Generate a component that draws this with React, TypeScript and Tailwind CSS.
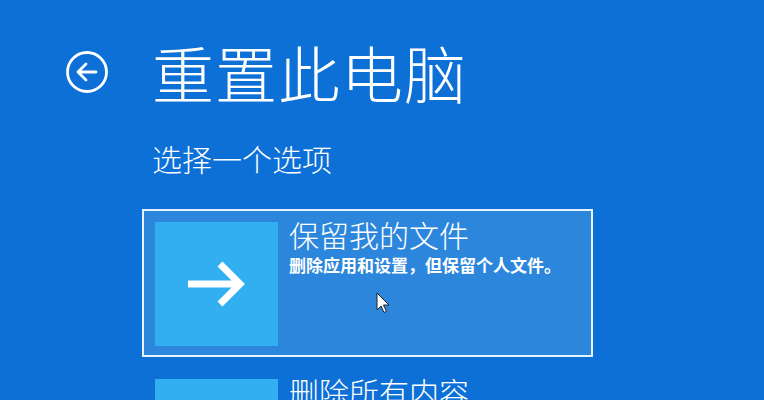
import React from 'react';

type Option = {
  title: string;
  desc?: string;
  selected?: boolean;
};

const options: Option[] = [
  { title: '保留我的文件', desc: '删除应用和设置，但保留个人文件。', selected: true },
  { title: '删除所有内容', desc: '删除所有个人文件、应用和设置。' },
];

function BackIcon() {
  return (
    <svg width="44" height="44" viewBox="0 0 44 44" fill="none" stroke="white" strokeWidth="2.8" strokeLinecap="round" strokeLinejoin="round">
      <circle cx="22" cy="22" r="19.5" />
      <path d="M31 22H13M21 14l-8 8 8 8" />
    </svg>
  );
}

function ArrowIcon() {
  return (
    <svg width="62" height="50" viewBox="0 0 62 50" fill="none" stroke="white" strokeWidth="7" strokeLinejoin="miter">
      <path d="M2 25h52M34 5l20 20-20 20" />
    </svg>
  );
}

export default function App() {
  return (
    <div
      className="w-[764px] h-[400px] overflow-hidden bg-[#0d70d6] text-white relative"
      style={{ fontFamily: '"Noto Sans CJK SC", "Noto Sans", sans-serif' }}
    >
      <div className="flex items-center pt-[40px] pl-[65px]">
        <BackIcon />
        <h1 className="ml-[43px] text-[62px] leading-[64px] font-light tracking-[1px]">重置此电脑</h1>
      </div>

      <div className="pl-[152px] pt-[36px]">
        <p className="text-[30px] leading-[36px] font-light">选择一个选项</p>

        <div className="mt-[33px] flex flex-col gap-[9px] -ml-[10px]">
          {options.map((o) => (
            <div
              key={o.title}
              className={
                o.selected
                  ? 'w-[451px] h-[148px] border-2 border-[#e6f2fc] bg-[#2c87dc] p-[11px] flex'
                  : 'w-[451px] h-[148px] border-2 border-transparent p-[11px] flex'
              }
            >
              <div className="w-[123px] h-[124px] bg-[#31aff1] flex items-center justify-center shrink-0">
                <ArrowIcon />
              </div>
              <div className="ml-[11px] -mt-[5px] flex flex-col">
                <div className="text-[30px] leading-[34px] font-light">{o.title}</div>
                <div className="mt-[3px] text-[17px] leading-[22px] font-bold">{o.desc}</div>
              </div>
            </div>
          ))}
        </div>
      </div>

      <svg className="absolute left-[376px] top-[292px]" width="14" height="22" viewBox="0 0 14 22">
        <path d="M1 1v17l4-4 3 6.5 2.5-1.2-3-6.3h5.5z" fill="white" stroke="#222" strokeWidth="1" strokeLinejoin="round" />
      </svg>
    </div>
  );
}
